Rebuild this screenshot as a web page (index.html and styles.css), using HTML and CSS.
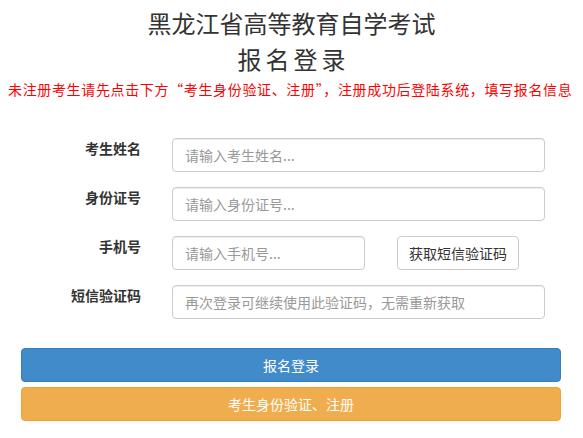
FILE: index.html
```html
<!DOCTYPE html>
<html lang="zh-CN">
<head>
<meta charset="utf-8">
<title>报名登录</title>
<link rel="stylesheet" href="styles.css">
</head>
<body>
<div class="page">
  <header class="head">
    <h1 class="title">黑龙江省高等教育自学考试</h1>
    <h2 class="subtitle">报名登录</h2>
    <p class="notice">未注册考生请先点击下方“考生身份验证、注册”，注册成功后登陆系统，填写报名信息</p>
  </header>
  <form class="form">
    <div class="row">
      <label class="label">考生姓名</label>
      <input class="input input-wide" type="text" placeholder="请输入考生姓名...">
    </div>
    <div class="row">
      <label class="label">身份证号</label>
      <input class="input input-wide" type="text" placeholder="请输入身份证号...">
    </div>
    <div class="row">
      <label class="label">手机号</label>
      <input class="input input-phone" type="text" placeholder="请输入手机号...">
      <button class="btn-code" type="button">获取短信验证码</button>
    </div>
    <div class="row">
      <label class="label">短信验证码</label>
      <input class="input input-wide" type="text" placeholder="再次登录可继续使用此验证码，无需重新获取">
    </div>
    <div class="actions">
      <button class="btn btn-primary" type="button">报名登录</button>
      <button class="btn btn-warning" type="button">考生身份验证、注册</button>
    </div>
  </form>
</div>
</body>
</html>
```

FILE: styles.css
```css
* { box-sizing: border-box; }
html, body {
  margin: 0;
  padding: 0;
  background: #fff;
}
body {
  font-family: "Noto Sans CJK SC", "Microsoft YaHei", "Liberation Sans", sans-serif;
  font-size: 14px;
  color: #333;
}
.page {
  width: 583px;
  padding-top: 10px;
}
.head {
  text-align: center;
}
.title {
  margin: 0;
  font-size: 24px;
  line-height: 26px;
  font-weight: normal;
  color: #333;
}
.subtitle {
  margin: 10px 0 0;
  font-size: 24px;
  line-height: 26px;
  font-weight: normal;
  letter-spacing: 4px;
  padding-left: 4px;
  color: #333;
}
.notice {
  margin: 7px 0 0;
  font-size: 14px;
  line-height: 20px;
  color: #f00;
  white-space: nowrap;
  text-align: left;
  padding-left: 8px;
  letter-spacing: 0.65px;
}
.form {
  margin-top: 39px;
  display: flex;
  flex-direction: column;
}
.row {
  display: flex;
  align-items: flex-start;
  margin-bottom: 15px;
}
.label {
  width: 141px;
  text-align: right;
  font-weight: bold;
  font-size: 14px;
  line-height: 20px;
  margin-right: 31px;
  color: #333;
}
.input {
  height: 34px;
  padding: 6px 12px;
  border: 1px solid #ccc;
  border-radius: 4px;
  font-family: inherit;
  font-size: 14px;
  color: #555;
  background: #fff;
  box-shadow: inset 0 1px 1px rgba(0,0,0,.075);
  outline: none;
}
.input::placeholder { color: #999; }
.input-wide { width: 373px; }
.input-phone { width: 193px; }
.btn-code {
  margin-left: 32px;
  width: 122px;
  height: 34px;
  padding: 0;
  border: 1px solid #ccc;
  border-radius: 4px;
  background: #fff;
  color: #333;
  font-family: inherit;
  font-size: 14px;
}
.actions {
  margin-top: 14px;
  padding: 0 22px 0 21px;
  display: flex;
  flex-direction: column;
  gap: 5px;
}
.btn {
  height: 34px;
  width: 100%;
  border: 1px solid transparent;
  border-radius: 4px;
  color: #fff;
  font-family: inherit;
  font-size: 14px;
  padding: 0;
}
.btn-primary {
  background: #428bca;
  border-color: #357ebd;
}
.btn-warning {
  background: #f0ad4e;
  border-color: #eea236;
}
```
